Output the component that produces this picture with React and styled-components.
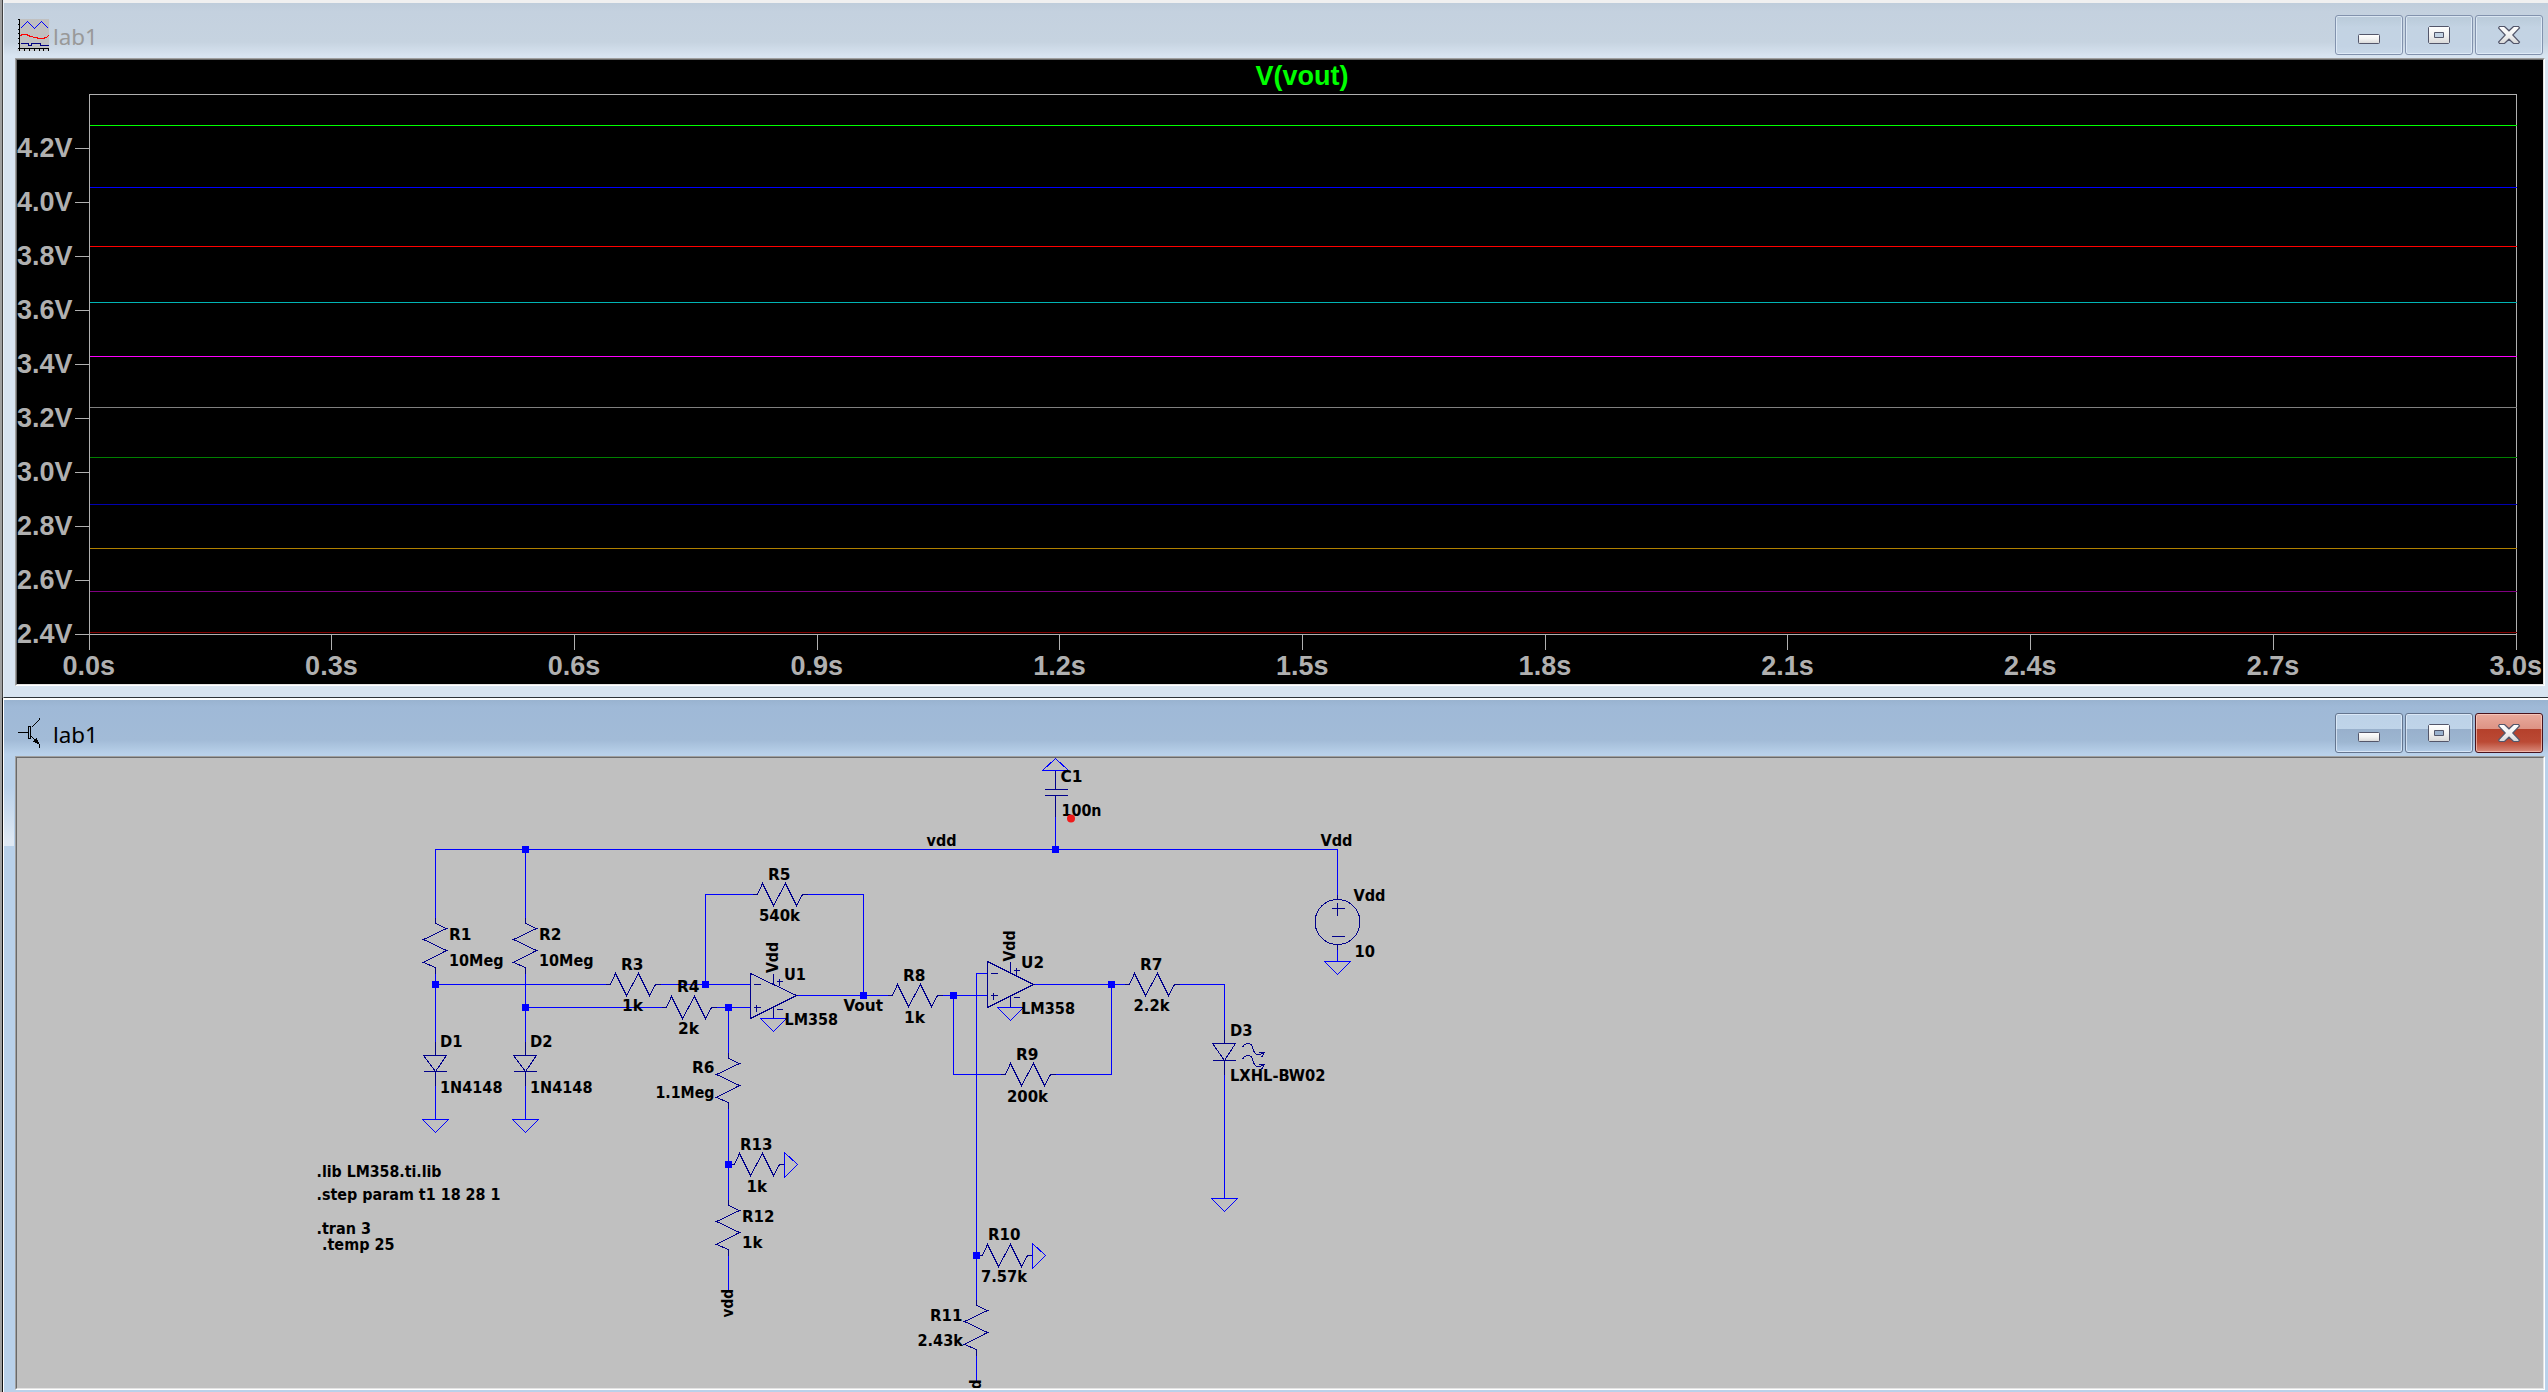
import React from 'react';
import styled, { createGlobalStyle } from 'styled-components';

const GlobalStyle = createGlobalStyle`
  html, body { margin: 0; padding: 0; overflow: hidden; }
  body { background: #a0a0a0; }
`;

const WIRE = '#0000ff';
const PART = '#00008b';

/* ---------- window chrome ---------- */

const Workspace = styled.div`
  display: grid;
  grid-template-rows: 698px 694px;
  width: 2548px;
  height: 1392px;
  box-sizing: border-box;
  padding-left: 2px;
  overflow: hidden;
  background: #a0a0a0;
`;

const WindowFrame = styled.section`
  display: grid;
  grid-template-rows: 58px 1fr;
  box-sizing: border-box;
  border-left: 1px solid ${p => (p.$active ? '#101010' : '#404040')};
  background: ${p => (p.$active ? '#b9d1ea' : '#d8e4f1')};
`;

const TitleBar = styled.header`
  display: flex;
  align-items: flex-start;
  box-sizing: border-box;
  padding: 0 5px 0 13px;
  border-left: 1px solid ${p => (p.$active ? '#ffffff' : '#eaf1f8')};
  background: ${p => (p.$active
    ? 'linear-gradient(#ffffff 0 2px, #99b3d0 2px, #9fb9d7 9px, #a2bbd7 42px, #b9d1ea 56px)'
    : 'linear-gradient(#f0f0f0 0 3px, #bfcddb 3px, #c4d1df 12px, #c6d3e0 42px, #d8e4f1 56px)')};
`;

const TitleIcon = styled.svg`
  display: block;
  width: 32px;
  height: 32px;
  margin-top: 19px;
`;

const Title = styled.h1`
  flex: 1;
  margin: 21px 0 0 4px;
  font: 400 22.4px/32px "Noto Sans", "Open Sans", sans-serif;
  color: ${p => (p.$active ? '#000' : '#999')};
`;

const Controls = styled.div`
  display: flex;
  gap: 2px;
  padding-top: 15px;
`;

const buttonFill = {
  idle: 'linear-gradient(#b9cad9, #c3d3e3 30%, #c3d3e4 80%, #c9d8e8)',
  normal: 'linear-gradient(#bdd2e8 0, #bfd4e9 15px, #98b0cc 15px, #9db6d1 28px, #b4cde8 38px)',
  close: 'linear-gradient(#e8aa9d 0, #dd9384 15px, #b5402b 15px, #bb4a35 28px, #d98b7c 38px)',
};
const buttonEdge = { idle: '#8292ad', normal: '#64758f', close: '#48121c' };

const ControlButton = styled.button`
  display: flex;
  justify-content: flex-start;
  align-items: flex-start;
  width: 68px;
  height: 40px;
  box-sizing: border-box;
  padding: 10px 0 0 22px;
  border: 1px solid ${p => buttonEdge[p.$kind]};
  border-radius: 3px;
  background: ${p => buttonFill[p.$kind]};
  box-shadow: inset 0 0 0 1px ${p => (p.$kind === 'close' ? 'rgba(255,215,205,.6)' : 'rgba(235,244,255,.65)')};
`;

const Glyph = styled.svg`
  display: block;
  width: 24px;
  height: 20px;
`;

const Body = styled.div`
  display: flex;
  padding: 0 3px ${p => (p.$active ? '2px' : '11px')} 11px;
  border-left: 1px solid ${p => (p.$active ? '#ffffff' : '#eaf1f8')};
  border-bottom: ${p => (p.$active ? '0' : '1px solid #2e3338')};
  background: ${p => (p.$active
    ? 'linear-gradient(#b9d1ea 0, #b9d1ea 30px, #dfe9f4 85px, #dfe9f4 90px) 0 0 / 10px 90px no-repeat'
    : 'none')};
`;

const Client = styled.div`
  flex: 1;
  box-sizing: border-box;
  border-style: solid;
  border-width: 1px;
  border-color: #a0a0a0 #ffffff #ffffff #a0a0a0;
`;

const SunkenEdge = styled.div`
  height: 100%;
  box-sizing: border-box;
  border-style: solid;
  border-width: 1px;
  border-color: #696969 #e3e3e3 #e3e3e3 #696969;
  background: ${p => p.$fill};
  overflow: hidden;
`;

const Canvas = styled.svg`
  display: block;
  width: 2526px;
  height: ${p => p.$h}px;
  shape-rendering: crispEdges;
`;

const AxisText = styled.text`
  font: bold 27px "Liberation Sans", Arial, sans-serif;
  fill: ${p => p.$color || '#b0b0b0'};
`;

const SchemText = styled.text`
  font: bold 16.5px "DejaVu Sans Condensed", "DejaVu Sans", sans-serif;
  font-stretch: condensed;
  fill: #000;
`;

/* ---------- icons ---------- */

const WaveIcon = () => (
  <TitleIcon viewBox="0 0 32 32" shapeRendering="crispEdges">
    <rect x="2" width="30" height="30" fill="#c0c0c0" />
    <rect y="30" width="32" height="2" fill="#c0c0c0" opacity=".55" />
    <g transform="translate(.5 .5)" fill="none" strokeWidth="1">
      <path stroke="#000" d="M2 0V32M0 0H2M0 5H2M0 10H2M0 14H2M0 19H2M0 24H2M0 29H32M7 29V32M12 29V32M17 29V32M22 29V32M26 29V32M31 29V32" />
      <path stroke="#00f" d="M3 9L10 2L17 9L24 2L31 9" />
      <path stroke="#f00" d="M3 16L5 15H9L13 17L18 18L22 19H25L29 18L31 16" />
      <path stroke="#000080" d="M3 24H11V26H14V24H23V26H32" />
    </g>
  </TitleIcon>
);

const TransistorIcon = () => (
  <TitleIcon viewBox="0 0 32 32" shapeRendering="crispEdges">
    <g transform="translate(.5 .5)" fill="none" stroke="#000">
      <path d="M0 15H11M11 9H13V21H11ZM14 10L22 2V0M14 19L22 27V30" />
      <path fill="#000" d="M16 24L19 21L21 26Z" />
    </g>
  </TitleIcon>
);

const glyphFill = (
  <linearGradient id="glyph" x1="0" y1="0" x2="0" y2="1">
    <stop offset="0" stopColor="#fff" />
    <stop offset=".5" stopColor="#f2f2f2" />
    <stop offset="1" stopColor="#d8d8d8" />
  </linearGradient>
);

const Minimize = () => (
  <Glyph viewBox="0 0 24 20">
    <defs>{glyphFill}</defs>
    <rect x=".5" y="8.5" width="21" height="9" rx="1" fill="url(#glyph)" stroke="#53566a" />
  </Glyph>
);
const Maximize = () => (
  <Glyph viewBox="0 0 24 20">
    <path d="M1.5 .5H20.5L21.5 1.5V16.5L20.5 17.5H1.5L.5 16.5V1.5ZM6.5 6.5V11.5H15.5V6.5Z" fill="url(#glyph)" fillRule="evenodd" stroke="#53566a" />
  </Glyph>
);
const Close = () => (
  <Glyph viewBox="0 0 24 20">
    <path d="M1.5 .5H6.5L11 4.8L15.5 .5H20.5L21.5 2L14.8 9L21.5 16L20.5 17.5H15.5L11 13.2L6.5 17.5H1.5L.5 16L7.2 9L.5 2Z" fill="url(#glyph)" stroke="#53566a" strokeWidth="1.2" />
  </Glyph>
);

function Window({ active, icon, title, fill, children }) {
  return (
    <WindowFrame $active={active}>
      <TitleBar $active={active}>
        {icon}
        <Title $active={active}>{title}</Title>
        <Controls>
          <ControlButton $kind={active ? 'normal' : 'idle'} aria-label="Minimize"><Minimize /></ControlButton>
          <ControlButton $kind={active ? 'normal' : 'idle'} aria-label="Maximize"><Maximize /></ControlButton>
          <ControlButton $kind={active ? 'close' : 'idle'} aria-label="Close"><Close /></ControlButton>
        </Controls>
      </TitleBar>
      <Body $active={active}>
        <Client><SunkenEdge $fill={fill}>{children}</SunkenEdge></Client>
      </Body>
    </WindowFrame>
  );
}

/* ---------- waveform plot ---------- */

const traces = [
  [125, '#00ff00'], [187, '#0000ff'], [246, '#ff0000'], [302, '#00b4b4'],
  [356, '#ff00ff'], [407, '#808080'], [457, '#008000'], [504, '#0000b0'],
  [548, '#b08000'], [591, '#800080'], [632, '#800000'],
];
const volts = ['4.2V', '4.0V', '3.8V', '3.6V', '3.4V', '3.2V', '3.0V', '2.8V', '2.6V', '2.4V'];
const times = ['0.0s', '0.3s', '0.6s', '0.9s', '1.2s', '1.5s', '1.8s', '2.1s', '2.4s', '2.7s', '3.0s'];

function Plot() {
  return (
    <Canvas $h={624} viewBox="17 60 2526 624">
      <g transform="translate(.5 .5)" fill="none" stroke="#b0b0b0">
        <path d="M89 649V94H2516V649M74 634H2516" />
        {volts.map((v, i) => <path key={v} d={`M74 ${148 + i * 54}H89`} />)}
        {times.map((t, i) => <path key={t} d={`M${Math.floor(89 + i * 242.7)} 634V649`} />)}
        {traces.map(([y, c]) => <path key={y} d={`M89 ${y}H2516`} stroke={c} />)}
      </g>
      <AxisText $color="#00ff00" x="1302" y="85" textAnchor="middle">V(vout)</AxisText>
      {volts.map((v, i) => (
        <AxisText key={v} x="17" y={156.5 + i * 54} textLength="55.5" lengthAdjust="spacingAndGlyphs">{v}</AxisText>
      ))}
      {times.map((t, i) => (
        <AxisText key={t} x={88.7 + i * 242.7} y="674.5" textAnchor="middle">{t}</AxisText>
      ))}
    </Canvas>
  );
}

/* ---------- schematic ---------- */

const ResistorH = ({ x, y }) => (
  <path stroke={PART} d={`M${x - 5} ${y}H${x}l5 -11l11 22l12 -22l11 22l6 -11h5`} />
);
const ResistorV = ({ x, y }) => (
  <path stroke={PART} d={`M${x} ${y - 6}V${y}l11 5l-23 11l23 11l-23 12l12 5v6`} />
);
const Ground = ({ x, y }) => <path stroke={WIRE} d={`M${x - 13} ${y}h26l-13 13z`} />;
const GroundRight = ({ x, y }) => <path stroke={WIRE} d={`M${x} ${y - 12}v25l13 -13z`} />;
const Diode = ({ x, y, h }) => (
  <path stroke={PART} d={`M${x} ${y - 14}V${y}M${x - 12} ${y}h23l-11 ${h}zM${x - 12} ${y + h}h23M${x} ${y + h}v14`} />
);
const OpAmp = ({ x, top, neg, mid, pos, bottom }) => (
  <>
    <path
      stroke={PART}
      d={`M${x} ${top}V${bottom}L${x + 46} ${mid}ZM${x + 3} ${neg}h7M${x + 3} ${pos}h7M${x + 6} ${pos - 3}v7
        M${x + 23} ${top}V${neg}M${x + 23} ${pos}V${bottom}
        M${x + 26} ${neg - 3}h6M${x + 29} ${neg - 6}v7M${x + 26} ${pos + 2}h6`}
    />
    <Ground x={x + 23} y={bottom} />
  </>
);

const wires = [
  'M435 918V849H1337V895', 'M525 918V849', 'M435 972V1042', 'M525 972V1042',
  'M435 984H605', 'M525 1007H661', 'M660 984H750', 'M716 1007H750',
  'M752 894H705V984', 'M807 894H863V995', 'M796 995H887', 'M942 995H987',
  'M953 995V1074H1000', 'M1055 1074H1111V984', 'M1033 984H1124', 'M1179 984H1224V1030',
  'M987 973H976V1300', 'M728 1007V1052', 'M728 1108V1200', 'M728 1254V1290',
  'M976 1355V1380', 'M435 1085V1119', 'M525 1085V1119', 'M1224 1073V1198',
  'M1055 815V849', 'M1337 948V961',
];

const nodes = [
  [525, 849], [1055, 849], [435, 984], [525, 1007], [705, 984], [728, 1007],
  [863, 995], [953, 995], [1111, 984], [728, 1164], [976, 1255],
];

// text, ink left, baseline, ink width
const labels = [
  ['C1', 1061.5, 782, 20], ['100n', 1062.5, 816, 38], ['vdd', 927.5, 846, 28],
  ['Vdd', 1321.5, 846, 30], ['Vdd', 1354.5, 901, 30], ['10', 1355.5, 957, 18.5],
  ['R1', 450, 940, 20.5], ['10Meg', 450, 966, 52.5], ['R2', 540, 940, 20.5], ['10Meg', 540, 966, 52.5],
  ['R3', 622, 970, 20.5], ['1k', 623, 1011, 19], ['R4', 678, 992, 20.5], ['2k', 679, 1034, 19],
  ['R5', 769, 880, 20.5], ['540k', 760, 921, 39], ['U1', 785, 980, 20], ['LM358', 785.5, 1025, 51.5],
  ['Vout', 844.5, 1011, 37.5], ['R8', 904, 981, 20.5], ['1k', 905, 1023, 19],
  ['U2', 1022, 968, 21], ['LM358', 1022, 1014, 52], ['R9', 1017, 1060, 20.5], ['200k', 1008, 1102, 39],
  ['R7', 1141, 970, 20.5], ['2.2k', 1134.5, 1011, 34], ['D3', 1231, 1036, 20.5], ['LXHL-BW02', 1231, 1081, 93.5],
  ['D1', 441, 1047, 20.5], ['1N4148', 441, 1093, 60.5], ['D2', 531, 1047, 20.5], ['1N4148', 531, 1093, 60.5],
  ['R6', 693, 1073, 20.5], ['1.1Meg', 656.5, 1098, 57], ['R13', 741, 1150, 30.5], ['1k', 747.5, 1192, 18.5],
  ['R12', 743, 1222, 30.5], ['1k', 743, 1248, 18.5], ['R10', 989, 1240, 30.5], ['7.57k', 982, 1282, 44],
  ['R11', 931, 1321, 30.5], ['2.43k', 918.5, 1346, 43.5],
  ['.lib LM358.ti.lib', 317.5, 1177, 123], ['.step param t1 18 28 1', 317.5, 1200, 182],
  ['.tran 3', 317.5, 1234, 52.5], ['.temp 25', 323, 1250, 70.5],
];

// text, baseline x, lower end y, ink length
const uprightLabels = [
  ['Vdd', 778, 973, 30], ['Vdd', 1015, 961.5, 30], ['vdd', 732.5, 1317.5, 27.5], ['vdd', 981, 1408, 27.5],
];

function Schematic() {
  return (
    <Canvas $h={630} viewBox="17 758 2526 630">
      <g transform="translate(.5 .5)" fill="none">
        {wires.map(d => <path key={d} d={d} stroke={WIRE} />)}
        <ResistorV x={435} y={923} />
        <ResistorV x={525} y={923} />
        <ResistorV x={728} y={1058} />
        <ResistorV x={728} y={1205} />
        <ResistorV x={976} y={1305} />
        <ResistorH x={610} y={984} />
        <ResistorH x={666} y={1007} />
        <ResistorH x={757} y={894} />
        <ResistorH x={892} y={995} />
        <ResistorH x={1129} y={984} />
        <ResistorH x={1005} y={1074} />
        <ResistorH x={734} y={1164} />
        <ResistorH x={982} y={1255} />
        <OpAmp x={750} top={973} neg={984} mid={995} pos={1007} bottom={1018} />
        <OpAmp x={987} top={961} neg={973} mid={984} pos={995} bottom={1007} />
        <Diode x={435} y={1055} h={16} />
        <Diode x={525} y={1055} h={16} />
        <Diode x={1224} y={1043} h={17} />
        {[0, 12].map(dy => (
          <path
            key={dy}
            stroke={PART}
            transform={`translate(0 ${dy})`}
            d="M1242 1047C1243 1044 1246 1043 1248 1043C1252 1043 1252 1047 1253 1050C1254 1053 1256 1055 1259 1054L1264 1052M1258 1052H1264L1261 1057"
          />
        ))}
        <path stroke={PART} d="M1055 770V789M1044 789H1067M1044 795H1067M1055 795V816" />
        <path stroke={WIRE} d="M1042 770H1068L1055 758Z" />
        <circle cx="1337" cy="921.5" r="22.5" stroke={PART} />
        <path stroke={PART} d="M1337 894V899M1331 908H1344M1337 902V915M1331 936H1344M1337 944V949" />
        <Ground x={435} y={1119} />
        <Ground x={525} y={1119} />
        <Ground x={1224} y={1198} />
        <Ground x={1337} y={961} />
        <GroundRight x={784} y={1164} />
        <GroundRight x={1032} y={1255} />
      </g>
      {nodes.map(([x, y]) => <rect key={`${x}-${y}`} x={x - 3} y={y - 3} width="7" height="7" fill={WIRE} />)}
      {labels.map(([t, x, y, w], i) => (
        <SchemText key={i} x={x - 1} y={y} textLength={w + 2} lengthAdjust="spacingAndGlyphs">{t}</SchemText>
      ))}
      {uprightLabels.map(([t, x, y, w], i) => (
        <SchemText key={i} transform={`translate(${x} ${y}) rotate(-90)`} textLength={w + 1} lengthAdjust="spacingAndGlyphs">{t}</SchemText>
      ))}
      <circle cx="1071" cy="818.5" r="4" fill="#f01a1a" shapeRendering="auto" />
    </Canvas>
  );
}

export default function App() {
  return (
    <>
      <GlobalStyle />
      <Workspace>
        <Window icon={<WaveIcon />} title="lab1" fill="#000">
          <Plot />
        </Window>
        <Window active icon={<TransistorIcon />} title="lab1" fill="#c0c0c0">
          <Schematic />
        </Window>
      </Workspace>
    </>
  );
}
